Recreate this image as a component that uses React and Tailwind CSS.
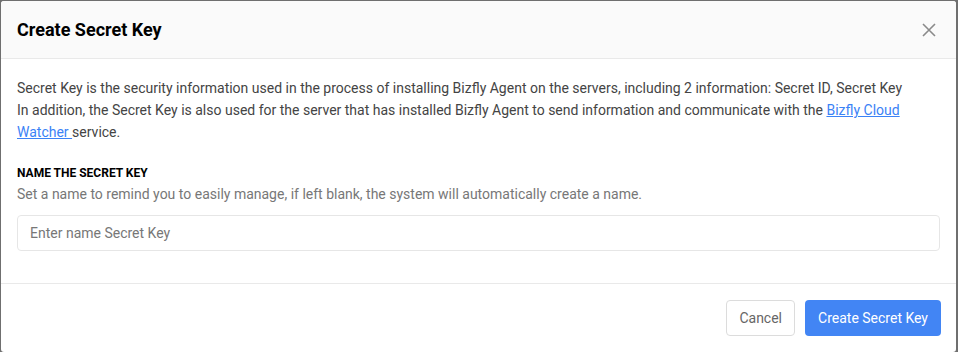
export default function App() {
  return (
    <div className="h-[352px] w-[958px] bg-[#6f6f6f] pt-px pl-px pr-[2px]" style={{ fontFamily: "Roboto, 'Liberation Sans', sans-serif" }}>
      <div className="flex h-[351px] flex-col overflow-hidden rounded-[3px] bg-white">
        <div className="flex h-[58px] shrink-0 items-center justify-between border-b border-[#e9e9e9] bg-[#fafafa] pl-4 pr-[19px]">
          <h2 className="text-[18px] font-bold text-black">Create Secret Key</h2>
          <svg width="16" height="16" viewBox="0 0 16 16" className="text-[#8a8a8a]">
            <path d="M2 2 L14 14 M14 2 L2 14" stroke="currentColor" strokeWidth="1.6" />
          </svg>
        </div>
        <div className="px-4 pt-[18px]">
          <p className="text-sm leading-[22px] text-[#444]">
            Secret Key is the security information used in the process of installing Bizfly Agent on the servers, including 2 information: Secret ID, Secret Key
            <br />
            In addition, the Secret Key is also used for the server that has installed Bizfly Agent to send information and communicate with the{" "}
            <a href="#" className="text-[#3b82f6] underline">Bizfly Cloud Watcher </a>service.
          </p>
          <p className="mt-[22px] text-xs font-bold uppercase text-black">Name the secret key</p>
          <p className="mt-[2px] text-sm leading-[22px] text-[#777]">Set a name to remind you to easily manage, if left blank, the system will automatically create a name.</p>
          <input
            placeholder="Enter name Secret Key"
            className="mt-[10px] h-[36px] w-full rounded-[4px] border border-[#e6e6e6] px-3 text-sm text-[#444] placeholder:text-[#777] outline-none"
          />
        </div>
        <div className="mt-[32px] flex justify-end gap-[10px] border-t border-[#e9e9e9] pl-4 pr-[15px] pt-4">
          <button className="h-[36px] rounded-[4px] border border-[#dcdcdc] bg-white px-[12px] text-sm text-[#666]">Cancel</button>
          <button className="h-[36px] rounded-[4px] bg-[#4285f4] px-[13px] text-sm text-white">Create Secret Key</button>
        </div>
      </div>
    </div>
  );
}
